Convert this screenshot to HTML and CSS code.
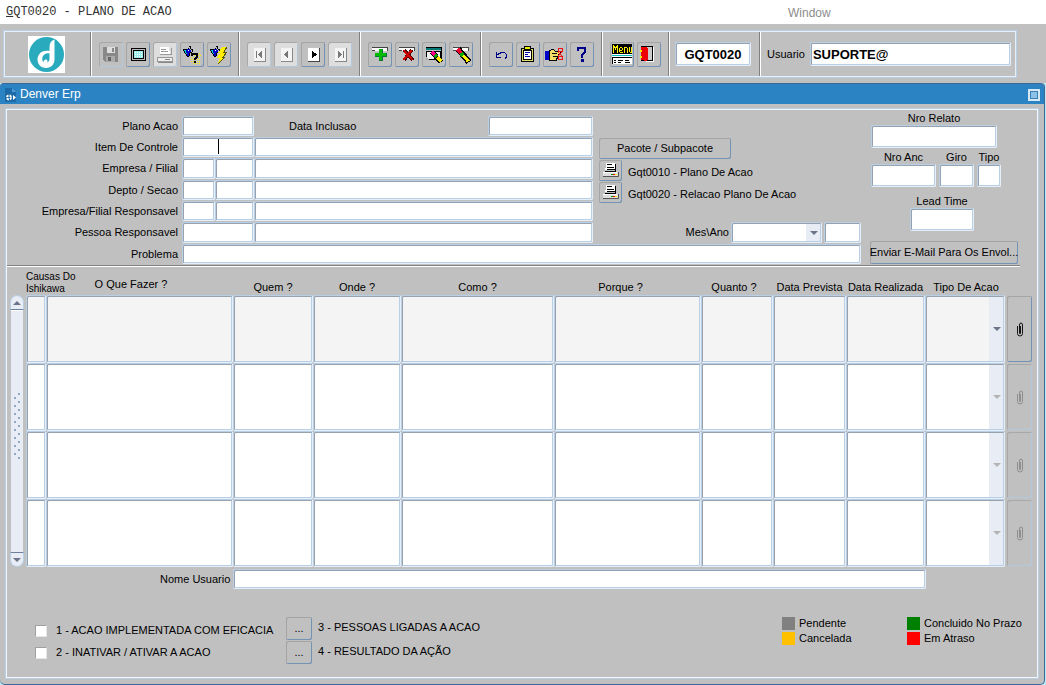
FILE: index.html
```html
<!DOCTYPE html>
<html lang="pt-BR">
<head>
    <meta charset="UTF-8">
    <meta name="viewport" content="width=device-width, initial-scale=1.0">
    <title>GQT0020 - PLANO DE ACAO</title>
    <link rel="stylesheet" href="styles.css">
</head>
<body>
    <!-- shared icons -->
    <svg class="defs" aria-hidden="true">
        <symbol id="clip" viewBox="0 0 8 15">
            <path d="M1.500 4v7.500q0 2.500 2.500 2.500t2.500-2.500V3q0-2-1.500-2T3.500 3v8q0 .8.500.8t.5-.8V4" fill="none" stroke="currentColor" stroke-width=".9"/>
        </symbol>
        <symbol id="printer" viewBox="0 0 16 15">
            <path d="M3 0h9v7H2V5h1z" fill="#fff"/>
            <path d="M4 1.500h5M4 4.500h7M4 6.500h8M12.500 1v7M2 8.500h11" stroke="#000" fill="none"/>
            <path d="M0 9h15v4H0z" fill="#ddd"/>
            <path d="M0 9.500h14" stroke="#fff"/>
            <path d="M0 13.500h15.500V9" stroke="#555" fill="none"/>
            <path d="M8 11h2v1H8z" fill="#090"/><path d="M10 11h2v1h-2z" fill="#e00"/><path d="M12 11h2v1h-2z" fill="#fe0"/>
        </symbol>
        <symbol id="torch" viewBox="0 0 11 11">
            <path d="M0 4l3-1 2 3-1 4z" fill="#0cc"/>
            <path d="M3 4l2-2 3 3-1 4-3 1z" fill="#00c"/>
            <path d="M0 3.500h4M5 2.500h1M6 .5h2M7.500 1v2M8 3.500h2M9.500 4v2M7 6.500h2M.5 4v1M1.500 5v2M2.500 7v1M3.500 8v2M4 10.500h2M6.500 7v3" stroke="#000" fill="none"/>
            <path d="M5 4h1v1H5z" fill="#fff"/>
        </symbol>
    </svg>

    <header class="menubar">
        <span class="menu-title"><u>G</u>QT0020 - PLANO DE ACAO</span>
        <span class="menu-window">Window</span>
    </header>

    <div class="toolbar">
        <div class="group logo">
            <svg width="37" height="37" viewBox="0 0 37 37">
                <rect width="37" height="37" fill="#fff"/>
                <circle cx="18.500" cy="18.500" r="17.500" fill="#2aabbd"/>
                <path d="M26.500 3.500c-3 .8-5 3.500-5 7.500v4c-6-1.500-12 2-12 8.500 0 5 4 8.500 8.700 8.500 5 0 8.300-3.500 8.300-9z" fill="#fff"/>
                <path d="M21.500 17.500c-3.500-.8-7 1.500-7.200 5-.2 1.800.4 3 1.200 3.800 0-2 1.500-3.300 3-2.800 1.200.5 1.300 2 .5 3 1.800-.5 2.500-2 2.500-4z" fill="#2aabbd"/>
            </svg>
        </div>
        <div class="group">
            <button class="tool off" aria-label="Salvar"><svg viewBox="0 0 24 25">
                <path d="M4 5h15v15H6l-2-2z" fill="#888"/><path d="M8 5h8v6H8z" fill="#ddd"/><path d="M13 6h2v4h-2z" fill="#888"/><path d="M7 14h9v6H7z" fill="#aaa"/><path d="M9 15h3v4H9z" fill="#666"/></svg></button>
            <button class="tool" aria-label="Tela"><svg viewBox="0 0 24 25">
                <path d="M5.500 6.500h14v12h-14z" fill="#bbb" stroke="#000"/><rect x="7.500" y="8.500" width="10" height="8" fill="#9ee" stroke="#000"/><path d="M9 10.500h8M9 12.500h8M9 14.500h8" stroke="#fff" stroke-dasharray="1 1"/></svg></button>
            <button class="tool off pale" aria-label="Imprimir"><svg viewBox="0 0 24 25">
                <path d="M7 5h9l1 7H7z" fill="#fff"/><path d="M8 7.500h5M8 9.500h7M7 12.500h11V6M4.500 15.500h15v4h-15z" stroke="#999" fill="none"/><path d="M5 16h14v3H5z" fill="#eee"/><path d="M12 17.500h5M5 20.500h15" stroke="#888"/></svg></button>
            <button class="tool" aria-label="Entrar consulta"><svg viewBox="0 0 24 25">
                <use href="#torch" x="3" y="4" width="11" height="11"/>
                <path d="M13 11.500h8M12 13.500h9M11 15.500h10M11 17.500h10M11 19.500h10M13 21.500h8" stroke="#fe0" stroke-dasharray="1 1"/>
                <path d="M12 14v-2h5v3l-2 2v1M15 19v2" stroke="#000" stroke-width="2" fill="none"/></svg></button>
            <button class="tool" aria-label="Executar consulta"><svg viewBox="0 0 24 25">
                <use href="#torch" x="3" y="4" width="11" height="11"/>
                <path d="M15 5h5l-3 5h3l-4 5h2l-7 7 2-6h-3l3-5h-2z" fill="#fe0"/><path d="M20 5l-3 5h3l-4 5h2l-7 7" stroke="#550" fill="none"/></svg></button>
        </div>
        <div class="group">
            <button class="tool off pale" aria-label="Primeiro"><svg viewBox="0 0 24 25">
                <path d="M7 6h11v13H7z" fill="#f4f4f4"/><path d="M7 19.500h11.500V6" stroke="#888" fill="none"/><path d="M9.500 9v7" stroke="#777"/><path d="M15 9v7l-4-3.500z" fill="#777"/></svg></button>
            <button class="tool off pale" aria-label="Anterior"><svg viewBox="0 0 24 25">
                <path d="M7 6h11v13H7z" fill="#f4f4f4"/><path d="M7 19.500h11.500V6" stroke="#888" fill="none"/><path d="M14 9v7l-4-3.500z" fill="#777"/></svg></button>
            <button class="tool" aria-label="Proximo"><svg viewBox="0 0 24 25">
                <path d="M7 6h11v13H7z" fill="#fff"/><path d="M7 19.500h11.500V6" stroke="#444" fill="none"/><path d="M11 9v7l4-3.500z" fill="#000" stroke="#000"/></svg></button>
            <button class="tool off pale" aria-label="Ultimo"><svg viewBox="0 0 24 25">
                <path d="M7 6h11v13H7z" fill="#f4f4f4"/><path d="M7 19.500h11.500V6" stroke="#888" fill="none"/><path d="M15.500 9v7" stroke="#777"/><path d="M10 9v7l4-3.500z" fill="#777"/></svg></button>
        </div>
        <div class="group">
            <button class="tool" aria-label="Inserir"><svg viewBox="0 0 24 25">
                <path d="M4 5h16v4H4z" fill="#fff"/><path d="M4 5.500h15.500V9M4 8.500h3" stroke="#444" fill="none"/><path d="M11 7h4v4h4v4h-4v4h-4v-4H7v-4h4z" fill="#073"/><path d="M11 7h3v4h4v3h-4v4h-3v-4H7v-3h4z" fill="#0b0"/></svg></button>
            <button class="tool" aria-label="Excluir"><svg viewBox="0 0 24 25">
                <path d="M4 5h16v4H4z" fill="#fff"/><path d="M4 5.500h15.500V9M4 8.500h3" stroke="#444" fill="none"/><path d="M9 8l9 10M17 8L9 18" stroke="#500" stroke-width="3.500"/><path d="M8.500 8l9 10M16.500 8L8.500 18" stroke="#c00" stroke-width="2"/></svg></button>
            <button class="tool" aria-label="Limpar bloco"><svg viewBox="0 0 24 25">
                <path d="M4 5.500h15.500V18" stroke="#000" fill="none"/><path d="M4 6h15v2H4z" fill="#077"/><path d="M4.500 9.500h14v8h-14z" fill="#eee" stroke="#000"/><path d="M4 18v-3l4 3z" fill="#aaa"/>
                <path d="M10 10l9 10" stroke="#000" stroke-width="5"/><path d="M10 10l3 3" stroke="#f08" stroke-width="4"/><path d="M13 13l2 2" stroke="#0a0" stroke-width="4"/><path d="M15.500 15.500l4 4" stroke="#fe0" stroke-width="4"/></svg></button>
            <button class="tool" aria-label="Limpar registro"><svg viewBox="0 0 24 25">
                <path d="M4 5h16v4H4z" fill="#fff"/><path d="M4 5.500h15.500V9M4 8.500h3" stroke="#444" fill="none"/><path d="M9 7l11 13" stroke="#000" stroke-width="6"/><path d="M8.500 7l3.500 4" stroke="#e03" stroke-width="4"/><path d="M12 11l2 2.500" stroke="#0a0" stroke-width="4"/><path d="M14 13.500l5.500 6" stroke="#fe0" stroke-width="3"/></svg></button>
        </div>
        <div class="group">
            <button class="tool" aria-label="Desfazer"><svg viewBox="0 0 24 25">
                <path d="M7 10v5h5M7 14q5-5 9-3 3 3 0 6" stroke="#008" fill="none"/></svg></button>
            <button class="tool" aria-label="Lista"><svg viewBox="0 0 24 25">
                <path d="M5.500 6.500h12v13h-12z" fill="#dd6" stroke="#000"/><path d="M7.500 8.500h8v9h-8z" fill="#fff" stroke="#000"/><path d="M8.500 4.500h6v3h-6z" fill="#ee0" stroke="#000"/><path d="M9 10.500h5M9 12.500h3M9 14.500h5" stroke="#00a"/></svg></button>
            <button class="tool" aria-label="Copiar"><svg viewBox="0 0 24 25">
                <path d="M2 9h4v9H2z" fill="#00c"/><path d="M6 9l4-2 2 2h5v3h-2v2h-1v2h-1v2H6z" fill="#ed6" stroke="#000"/><path d="M9 11.500h5M10 14.500h4" stroke="#000"/><circle cx="17.500" cy="8" r="2" stroke="#e11" fill="none"/><circle cx="17.500" cy="16" r="2" stroke="#e11" fill="none"/><path d="M15 14l4-4M15 10l4 4" stroke="#e11"/></svg></button>
            <button class="tool" aria-label="Ajuda"><svg viewBox="0 0 24 25">
                <path d="M8 9V6h7v4l-3 3v3" stroke="#008" stroke-width="2.500" fill="none"/><path d="M11 17h3v3h-3z" fill="#008"/></svg></button>
        </div>
        <div class="group">
            <button class="tool" aria-label="Menu"><svg viewBox="0 0 24 25">
                <path d="M2 2h20v10H2z" fill="#000"/><path d="M3.500 3v8M4.500 4v2M5.500 5v3M6.500 4v2M7.500 3v8M9.500 6v4M10 5.500h2M12.500 6v2M10 8.500h2M10 10.500h3M14.500 5v6M15 5.500h2M17.500 6v5M19.500 5v5M20 10.500h2M21.500 5v5" stroke="#fe0" fill="none"/><path d="M2 12h20v10H2z" fill="#fff"/><path d="M2 13.500h20" stroke="#0bb"/><path d="M2 15.500h20M4 18.500h2M8 18.500h5M15 18.500h4M4 20.500h2M8 20.500h3M15 20.500h5M2.500 15v7" stroke="#000"/></svg></button>
            <button class="tool" aria-label="Sair"><svg viewBox="0 0 24 25">
                <path d="M4.500 4.500h11v14h-11z" fill="#ccc" stroke="#000"/><path d="M16.500 5v14H9" stroke="#fff" fill="none"/><path d="M4 5h6l1 2v10l-2 2H7l-1-1H4z" fill="#e00"/><path d="M3 8h2v2H3zM3 14h2v2H3z" fill="#ee0"/></svg></button>
        </div>
        <div class="group code">
            <input type="text" value="GQT0020" aria-label="Programa">
        </div>
        <div class="user">
            <label for="usuario">Usuario</label>
            <input type="text" id="usuario" value="SUPORTE@">
        </div>
    </div>

    <main class="window">
        <div class="titlebar">
            <svg width="12" height="15" viewBox="0 0 12 15">
                <path d="M0 1h7l4 4v10H0z" fill="#1c6aa8"/><path d="M7 1v4h4" fill="#4f9dd4"/>
                <path d="M8 8v5l3-2.500z" fill="#fff"/><circle cx="4" cy="10.500" r="2" fill="none" stroke="#fff" stroke-width="2" stroke-dasharray="2 1"/>
            </svg>
            <h1>Denver Erp</h1>
            <button class="maximize" aria-label="Maximizar"></button>
        </div>

        <div class="panel">
            <section class="top">
                <div class="form">
                    <label for="plano">Plano Acao</label>
                    <input type="text" id="plano" class="two">
                    <div class="inclusao">
                        <label for="inclusao">Data Inclusao</label>
                        <input type="text" id="inclusao">
                    </div>

                    <label for="item">Item De Controle</label>
                    <input type="text" id="item" class="two caret">
                    <input type="text" aria-label="Descricao do item">

                    <label for="empresa">Empresa / Filial</label>
                    <input type="text" id="empresa">
                    <input type="text" aria-label="Filial">
                    <input type="text" aria-label="Nome da filial">

                    <label for="depto">Depto / Secao</label>
                    <input type="text" id="depto">
                    <input type="text" aria-label="Secao">
                    <input type="text" aria-label="Nome da secao">

                    <label for="empresa-resp">Empresa/Filial Responsavel</label>
                    <input type="text" id="empresa-resp">
                    <input type="text" aria-label="Filial responsavel">
                    <input type="text" aria-label="Nome da filial responsavel">

                    <label for="pessoa">Pessoa Responsavel</label>
                    <input type="text" id="pessoa" class="two">
                    <input type="text" aria-label="Nome da pessoa">
                    <div class="mes-ano">
                        <label for="mes">Mes\Ano</label>
                        <div class="select-box">
                            <select id="mes"><option></option></select>
                        </div>
                        <input type="text" aria-label="Ano">
                    </div>

                    <label for="problema">Problema</label>
                    <input type="text" id="problema" class="wide">

                    <div class="reports">
                        <button class="btn pacote">Pacote / Subpacote</button>
                        <div class="report">
                            <button class="btn" id="gqt0010" aria-label="Imprimir Gqt0010"><svg width="16" height="15"><use href="#printer"/></svg></button>
                            <label for="gqt0010">Gqt0010 - Plano De Acao</label>
                        </div>
                        <div class="report">
                            <button class="btn" id="gqt0020" aria-label="Imprimir Gqt0020"><svg width="16" height="15"><use href="#printer"/></svg></button>
                            <label for="gqt0020">Gqt0020 - Relacao Plano De Acao</label>
                        </div>
                    </div>
                </div>

                <div class="side">
                    <div class="stack relato">
                        <label for="relato">Nro Relato</label>
                        <input type="text" id="relato">
                    </div>
                    <div class="trio">
                        <div class="stack"><label for="anc">Nro Anc</label><input type="text" id="anc"></div>
                        <div class="stack"><label for="giro">Giro</label><input type="text" id="giro"></div>
                        <div class="stack"><label for="tipo">Tipo</label><input type="text" id="tipo"></div>
                    </div>
                    <div class="stack lead">
                        <label for="lead">Lead Time</label>
                        <input type="text" id="lead">
                    </div>
                    <button class="btn email">Enviar E-Mail Para Os Envol...</button>
                </div>
            </section>

            <hr class="divider">

            <section class="records">
                <div class="scrollbar">
                    <button class="up" aria-label="Subir"></button>
                    <div class="track"><span class="grip"></span></div>
                    <button class="down" aria-label="Descer"></button>
                </div>
                <table>
                    <colgroup>
                        <col class="c-causa"><col><col class="c-quem"><col class="c-onde"><col class="c-como"><col class="c-porque">
                        <col class="c-quanto"><col class="c-prevista"><col class="c-realizada"><col class="c-tipo"><col class="c-anexo">
                    </colgroup>
                    <thead>
                        <tr>
                            <th class="causas">Causas Do<br>Ishikawa</th>
                            <th class="fazer">O Que Fazer ?</th>
                            <th>Quem ?</th>
                            <th>Onde ?</th>
                            <th>Como ?</th>
                            <th class="porque">Porque ?</th>
                            <th class="quanto">Quanto ?</th>
                            <th>Data Prevista</th>
                            <th>Data Realizada</th>
                            <th>Tipo De Acao</th>
                            <th></th>
                        </tr>
                    </thead>
                    <tbody>
                        <tr class="current">
                            <td><textarea aria-label="Causa 1"></textarea></td>
                            <td><textarea aria-label="O que fazer 1"></textarea></td>
                            <td><textarea aria-label="Quem 1"></textarea></td>
                            <td><textarea aria-label="Onde 1"></textarea></td>
                            <td><textarea aria-label="Como 1"></textarea></td>
                            <td><textarea aria-label="Porque 1"></textarea></td>
                            <td><textarea aria-label="Quanto 1"></textarea></td>
                            <td><textarea aria-label="Data prevista 1"></textarea></td>
                            <td><textarea aria-label="Data realizada 1"></textarea></td>
                            <td class="tipo"><div class="select-box"><select aria-label="Tipo de acao 1"><option></option></select></div></td>
                            <td class="clip"><button class="btn anexo" aria-label="Anexo 1"><svg width="8" height="15"><use href="#clip"/></svg></button></td>
                        </tr>
                        <tr>
                            <td><textarea aria-label="Causa 2"></textarea></td>
                            <td><textarea aria-label="O que fazer 2"></textarea></td>
                            <td><textarea aria-label="Quem 2"></textarea></td>
                            <td><textarea aria-label="Onde 2"></textarea></td>
                            <td><textarea aria-label="Como 2"></textarea></td>
                            <td><textarea aria-label="Porque 2"></textarea></td>
                            <td><textarea aria-label="Quanto 2"></textarea></td>
                            <td><textarea aria-label="Data prevista 2"></textarea></td>
                            <td><textarea aria-label="Data realizada 2"></textarea></td>
                            <td class="tipo"><div class="select-box"><select aria-label="Tipo de acao 2" disabled><option></option></select></div></td>
                            <td class="clip"><button class="btn anexo" aria-label="Anexo 2" disabled><svg width="8" height="15"><use href="#clip"/></svg></button></td>
                        </tr>
                        <tr>
                            <td><textarea aria-label="Causa 3"></textarea></td>
                            <td><textarea aria-label="O que fazer 3"></textarea></td>
                            <td><textarea aria-label="Quem 3"></textarea></td>
                            <td><textarea aria-label="Onde 3"></textarea></td>
                            <td><textarea aria-label="Como 3"></textarea></td>
                            <td><textarea aria-label="Porque 3"></textarea></td>
                            <td><textarea aria-label="Quanto 3"></textarea></td>
                            <td><textarea aria-label="Data prevista 3"></textarea></td>
                            <td><textarea aria-label="Data realizada 3"></textarea></td>
                            <td class="tipo"><div class="select-box"><select aria-label="Tipo de acao 3" disabled><option></option></select></div></td>
                            <td class="clip"><button class="btn anexo" aria-label="Anexo 3" disabled><svg width="8" height="15"><use href="#clip"/></svg></button></td>
                        </tr>
                        <tr>
                            <td><textarea aria-label="Causa 4"></textarea></td>
                            <td><textarea aria-label="O que fazer 4"></textarea></td>
                            <td><textarea aria-label="Quem 4"></textarea></td>
                            <td><textarea aria-label="Onde 4"></textarea></td>
                            <td><textarea aria-label="Como 4"></textarea></td>
                            <td><textarea aria-label="Porque 4"></textarea></td>
                            <td><textarea aria-label="Quanto 4"></textarea></td>
                            <td><textarea aria-label="Data prevista 4"></textarea></td>
                            <td><textarea aria-label="Data realizada 4"></textarea></td>
                            <td class="tipo"><div class="select-box"><select aria-label="Tipo de acao 4" disabled><option></option></select></div></td>
                            <td class="clip"><button class="btn anexo" aria-label="Anexo 4" disabled><svg width="8" height="15"><use href="#clip"/></svg></button></td>
                        </tr>
                    </tbody>
                </table>
            </section>

            <div class="nome">
                <label for="nome">Nome Usuario</label>
                <input type="text" id="nome">
            </div>

            <footer class="bottom">
                <div class="checks">
                    <label><input type="checkbox">1 - ACAO IMPLEMENTADA COM EFICACIA</label>
                    <label><input type="checkbox">2 - INATIVAR / ATIVAR A ACAO</label>
                </div>
                <div class="links">
                    <button class="btn" id="pessoas">...</button>
                    <label for="pessoas">3 - PESSOAS LIGADAS A ACAO</label>
                    <button class="btn" id="resultado">...</button>
                    <label for="resultado">4 - RESULTADO DA AÇÃO</label>
                </div>
                <ul class="legend">
                    <li class="pendente">Pendente</li>
                    <li class="concluido">Concluido No Prazo</li>
                    <li class="cancelada">Cancelada</li>
                    <li class="atraso">Em Atraso</li>
                </ul>
            </footer>
        </div>
    </main>
</body>
</html>
```
FILE: styles.css
```css
* {
    box-sizing: border-box;
}
body {
    margin: 0;
    background: #b9ecf5;
    font-family: "Liberation Sans", Arial, sans-serif;
    font-size: 11px;
    line-height: 13px;
    color: #000;
}
input, select, textarea, button {
    font: inherit;
    color: inherit;
    margin: 0;
    padding: 0;
    min-width: 0;
    border-radius: 0;
}
button {
    border: none;
    background: #c0c0c0;
}
.defs {
    display: none;
}

/* sunken fields */
input[type="text"], textarea, select {
    display: block;
    width: 100%;
    height: 100%;
    background-color: #fff;
    border: 1px solid #b8cfe5;
    border-right-color: #e6eef8;
    border-bottom-color: #e6eef8;
    border-radius: 2px;
    box-shadow: inset 1px 1px 0 #98a2ae, inset -1px -1px 0 #b8cfe5;
    outline: none;
}
textarea {
    resize: none;
    overflow: hidden;
}
select {
    appearance: none;
    opacity: 1;
}
.select-box {
    position: relative;
    height: 100%;
}
.select-box select {
    background-image: linear-gradient(#e8edf5, #e8edf5);
    background-size: 14px 100%;
    background-position: right 1px top 0;
    background-repeat: no-repeat;
}
.select-box::after {
    content: "";
    position: absolute;
    right: 4px;
    top: calc(50% - 2px);
    border: 4px solid transparent;
    border-top-color: #6c7488;
    border-bottom: none;
    pointer-events: none;
}
.select-box:has(select:disabled)::after {
    border-top-color: #b4b4b4;
}

/* raised buttons */
.btn, .tool {
    display: flex;
    align-items: center;
    justify-content: center;
    border-radius: 2px;
    box-shadow: inset 1px 1px 0 #a4a4a4, inset -1px -1px 0 #7393b5;
}
.btn:disabled, .off {
    color: #888;
    box-shadow: inset 1px 1px 0 #a8a8a8, inset -1px -1px 0 #b4c8dc;
}

.menubar {
    display: flex;
    align-items: center;
    height: 24px;
    padding-left: 6px;
    background: #fff;
}
.menu-title {
    flex: 0 0 782px;
    font-family: "Liberation Mono", "Courier New", monospace;
    font-size: 12px;
    color: #333;
}
.menu-window {
    padding-top: 2px;
    font-size: 12px;
    color: #8c8c8c;
}

/* toolbar */
.toolbar {
    display: flex;
    height: 48px;
    border: 1px solid #b8cfe5;
    outline: 1px solid #e6eef8;
    outline-offset: -2px;
    margin: 6px 29px 5px 3px;
    box-shadow: 0 0 0 60px #c0c0c0;
    background: #c0c0c0;
    clip-path: inset(-6px -30px -5px -4px);
}
.group {
    display: flex;
    align-items: center;
    gap: 3px;
    padding: 0 8px 0 7px;
    border-right: 1px solid #fff;
    box-shadow: inset -1px 0 0 #808080;
}
.logo {
    width: 88px;
    padding: 0 0 0 24px;
}
.tool {
    width: 24px;
    height: 25px;
}
.tool svg {
    width: 24px;
    height: 25px;
    shape-rendering: crispEdges;
}
.pale {
    background: #dedede;
}
.code {
    width: 91px;
    padding: 0 9px 0 5px;
}
.code input[type="text"] {
    height: 24px;
    font-size: 13px;
    font-weight: bold;
    text-align: center;
}
.user {
    flex: 1;
    display: flex;
    align-items: center;
    gap: 5px;
    padding: 0 5px 0 6px;
}
.user input[type="text"] {
    flex: 1;
    height: 24px;
    padding-left: 2px;
    font-size: 13px;
    font-weight: bold;
}

/* window */
.window {
    margin-right: 1px;
    background: #c0c0c0;
    border: 1px solid #3c6796;
    border-top: none;
    border-left: none;
    border-radius: 4px 4px 5px 5px;
    padding-bottom: 5px;
}
.titlebar {
    display: flex;
    align-items: center;
    height: 21px;
    padding: 1px 4px 0 5px;
    gap: 3px;
    background: #2b83c4;
    border-top: 1px solid #3c6796;
    border-radius: 4px 4px 0 0;
    color: #fff;
}
.titlebar h1 {
    flex: 1;
    margin: 0;
    font-size: 12px;
    font-weight: normal;
}
.maximize {
    width: 12px;
    height: 12px;
    background: #8fc0e6;
    border: 2px solid #d6e8f6;
    box-shadow: inset 0 0 0 1px #3c80b8;
}
.panel {
    margin: 4px 5px 0;
    border: 1px solid #b8cfe5;
    box-shadow: inset 0 0 0 1px #f0f6fc;
    padding: 1px;
}

/* header form */
.top {
    display: flex;
    gap: 9px;
    padding-right: 19px;
}
.form {
    flex: 1;
    display: grid;
    grid-template-columns: 175px 33px 39px 1fr 268px;
    grid-template-rows: 20px 20px 21px 20px 20px 21px 20px;
    row-gap: 1px;
    padding-top: 6px;
}
.form > label {
    grid-column: 1;
    align-self: center;
    text-align: right;
    padding-right: 4px;
}
.two {
    grid-column: 2 / 4;
}
.wide {
    grid-column: 2 / 6;
}
.caret {
    background-image: linear-gradient(#000, #000);
    background-size: 1px 15px;
    background-position: 35px 1px;
    background-repeat: no-repeat;
}
.inclusao {
    display: flex;
    align-items: center;
    justify-content: space-between;
    padding-left: 35px;
}
.inclusao input[type="text"] {
    width: 105px;
}
.mes-ano {
    display: flex;
    align-items: center;
    justify-content: flex-end;
    gap: 2px;
}
.mes-ano .select-box {
    width: 91px;
}
.mes-ano input[type="text"] {
    width: 37px;
}
.reports {
    grid-column: 5;
    grid-row: 2 / 6;
    display: flex;
    flex-direction: column;
    gap: 1px;
    padding: 1px 0 0 6px;
}
.reports .btn {
    width: 23px;
    height: 21px;
}
.reports .pacote {
    width: 132px;
}
.report {
    display: flex;
    align-items: center;
    gap: 6px;
}
.report label {
    padding-top: 3px;
}
.side {
    width: 148px;
    display: flex;
    flex-direction: column;
    padding-top: 2px;
}
.stack {
    text-align: center;
}
.stack label {
    display: block;
}
.stack input[type="text"] {
    height: 23px;
}
.relato {
    width: 126px;
    margin-left: 1px;
}
.trio {
    display: grid;
    grid-template-columns: 65px 35px 24px;
    gap: 3px;
    margin: 3px 0 8px 1px;
}
.lead {
    width: 64px;
    margin: 0 0 10px 40px;
}
.email {
    height: 23px;
    white-space: nowrap;
}
.divider {
    margin: 1px 17px 0 0;
    border: none;
    border-top: 1px solid #808080;
    border-bottom: 1px solid #fff;
}

/* records */
.records {
    display: flex;
    gap: 2px;
    padding: 0 4px 0 3px;
}
.scrollbar {
    width: 14px;
    margin-top: 28px;
    display: flex;
    flex-direction: column;
}
.scrollbar button {
    height: 15px;
    display: flex;
    align-items: center;
    justify-content: center;
    background: #e8edf5;
    border: 1px solid #b8cfe5;
}
.scrollbar .up {
    border-radius: 7px 7px 0 0;
    border-bottom-color: #6c7f9c;
}
.scrollbar .down {
    border-radius: 0 0 7px 7px;
    border-top-color: #6c7f9c;
}
.scrollbar button::after {
    content: "";
    border: 4px solid transparent;
}
.scrollbar .up::after {
    border-bottom-color: #6c7488;
    border-top: none;
}
.scrollbar .down::after {
    border-top-color: #6c7488;
    border-bottom: none;
}
.track {
    flex: 1;
    display: flex;
    align-items: center;
    justify-content: center;
    margin: 0 1px;
    padding-bottom: 12px;
    background: #e8edf5;
    border-top: 1px solid #fff;
}
.grip {
    width: 8px;
    height: 68px;
    background: radial-gradient(circle at 6px 2px, #8fa9c4 1px, transparent 1px), radial-gradient(circle at 2px 6px, #8fa9c4 1px, transparent 1px);
    background-size: 8px 8px;
}
table {
    flex: 1;
    width: 100%;
    table-layout: fixed;
    border-collapse: collapse;
}
.c-causa { width: 20px; }
.c-quem { width: 80px; }
.c-onde { width: 88px; }
.c-como { width: 153px; }
.c-porque { width: 147px; }
.c-quanto { width: 72px; }
.c-prevista { width: 73px; }
.c-realizada { width: 79px; }
.c-tipo { width: 82px; }
.c-anexo { width: 26px; }
th {
    height: 28px;
    padding: 0 0 1px;
    font-weight: normal;
    vertical-align: bottom;
    white-space: nowrap;
}
th.causas {
    padding: 0;
    font-size: 10px;
    line-height: 12px;
    text-align: left;
}
th.fazer {
    padding: 0 17px 4px 0;
}
th.porque {
    padding-right: 14px;
}
th.quanto {
    padding-right: 6px;
}
td {
    height: 68px;
    padding: 0;
}
td textarea, td .select-box {
    height: 68px;
}
td.tipo {
    padding-right: 2px;
}
td.clip {
    padding-right: 1px;
}
.current textarea, .current select {
    background-color: #f4f4f4;
}
.anexo {
    width: 100%;
    height: 66px;
}

.nome {
    display: flex;
    align-items: center;
    gap: 3px;
    height: 20px;
    margin: 2px 111px 0 153px;
}
.nome input[type="text"] {
    flex: 1;
}

/* footer */
.bottom {
    display: flex;
    align-items: flex-start;
    padding: 28px 20px 13px 28px;
}
.checks {
    width: 251px;
    padding-top: 7px;
    display: flex;
    flex-direction: column;
    gap: 9px;
}
.checks label {
    display: flex;
    align-items: center;
    gap: 9px;
}
.checks input {
    appearance: none;
    width: 12px;
    height: 12px;
    background: #fff;
    border: 1px solid #a0a0a0;
    border-right-color: #e6e6e6;
    border-bottom-color: #e6e6e6;
}
.links {
    flex: 1;
    display: grid;
    grid-template-columns: 26px 1fr;
    gap: 1px 6px;
}
.links .btn {
    height: 23px;
}
.links label {
    padding-top: 4px;
}
.legend {
    list-style: none;
    margin: 0;
    padding: 0;
    display: grid;
    grid-template-columns: 125px 110px;
    row-gap: 2px;
}
.legend li {
    display: flex;
    align-items: center;
    gap: 4px;
    white-space: nowrap;
}
.legend li::before {
    content: "";
    flex: none;
    width: 13px;
    height: 13px;
    background: #808080;
}
.legend .concluido::before { background: #008000; }
.legend .cancelada::before { background: #ffc000; }
.legend .atraso::before { background: #f00; }
```
